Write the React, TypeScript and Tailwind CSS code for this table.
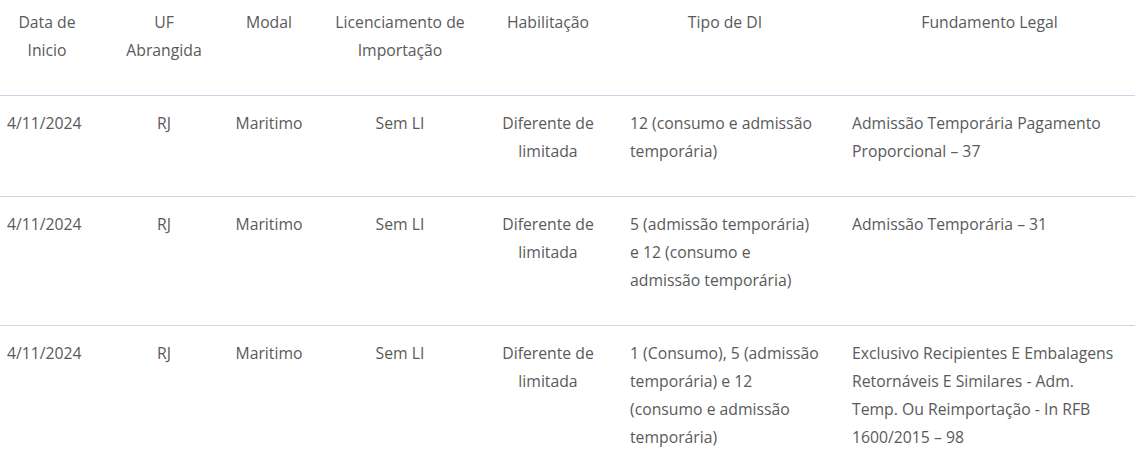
import React from "react";

type Row = {
  data: string;
  uf: string;
  modal: string;
  li: string;
  habilitacao: string[];
  tipo: string[];
  fundamento: string[];
};

const rows: Row[] = [
  {
    data: "4/11/2024",
    uf: "RJ",
    modal: "Maritimo",
    li: "Sem LI",
    habilitacao: ["Diferente de", "limitada"],
    tipo: ["12 (consumo e admissão", "temporária)"],
    fundamento: ["Admissão Temporária Pagamento", "Proporcional – 37"],
  },
  {
    data: "4/11/2024",
    uf: "RJ",
    modal: "Maritimo",
    li: "Sem LI",
    habilitacao: ["Diferente de", "limitada"],
    tipo: ["5 (admissão temporária)", "e 12 (consumo e", "admissão temporária)"],
    fundamento: ["Admissão Temporária – 31"],
  },
  {
    data: "4/11/2024",
    uf: "RJ",
    modal: "Maritimo",
    li: "Sem LI",
    habilitacao: ["Diferente de", "limitada"],
    tipo: ["1 (Consumo), 5 (admissão", "temporária) e 12", "(consumo e admissão", "temporária)"],
    fundamento: [
      "Exclusivo Recipientes E Embalagens",
      "Retornáveis E Similares - Adm.",
      "Temp. Ou Reimportação - In RFB",
      "1600/2015 – 98",
    ],
  },
];

function Lines({ lines }: { lines: string[] }) {
  return (
    <>
      {lines.map((l, i) => (
        <React.Fragment key={i}>
          {i > 0 && <br />}
          {l}
        </React.Fragment>
      ))}
    </>
  );
}

export default function App() {
  const th = "font-normal align-top pt-2 pb-[31px] text-center whitespace-nowrap";
  const td = "align-top pt-[13px] pb-[31px] whitespace-nowrap";
  return (
    <div
      className="w-[1135px] h-[469px] overflow-hidden bg-white text-[#5a5a5a] text-[15.75px] leading-[28px]"
      style={{ fontFamily: '"Open Sans", "Liberation Sans", sans-serif' }}
    >
      <table className="w-[1135px] table-fixed border-collapse">
        <colgroup>
          <col className="w-[116px]" />
          <col className="w-[96px]" />
          <col className="w-[114px]" />
          <col className="w-[148px]" />
          <col className="w-[148px]" />
          <col className="w-[222px]" />
          <col className="w-[291px]" />
        </colgroup>
        <thead>
          <tr className="border-b border-[#cbd4e8]">
            <th className={`${th} pr-[22px]`}>
              Data de
              <br />
              Inicio
            </th>
            <th className={th}>
              UF
              <br />
              Abrangida
            </th>
            <th className={th}>Modal</th>
            <th className={th}>
              Licenciamento de
              <br />
              Importação
            </th>
            <th className={th}>Habilitação</th>
            <th className={`${th} pr-4`}>Tipo de DI</th>
            <th className={th}>Fundamento Legal</th>
          </tr>
        </thead>
        <tbody>
          {rows.map((r, i) => (
            <tr key={i} className="border-b border-[#cbd4e8]">
              <td className={`${td} text-left pl-[7px]`}>{r.data}</td>
              <td className={`${td} text-center`}>{r.uf}</td>
              <td className={`${td} text-center`}>{r.modal}</td>
              <td className={`${td} text-center`}>{r.li}</td>
              <td className={`${td} text-center`}>
                <Lines lines={r.habilitacao} />
              </td>
              <td className={`${td} text-left pl-2`}>
                <Lines lines={r.tipo} />
              </td>
              <td className={`${td} text-left pl-2`}>
                <Lines lines={r.fundamento} />
              </td>
            </tr>
          ))}
        </tbody>
      </table>
    </div>
  );
}
